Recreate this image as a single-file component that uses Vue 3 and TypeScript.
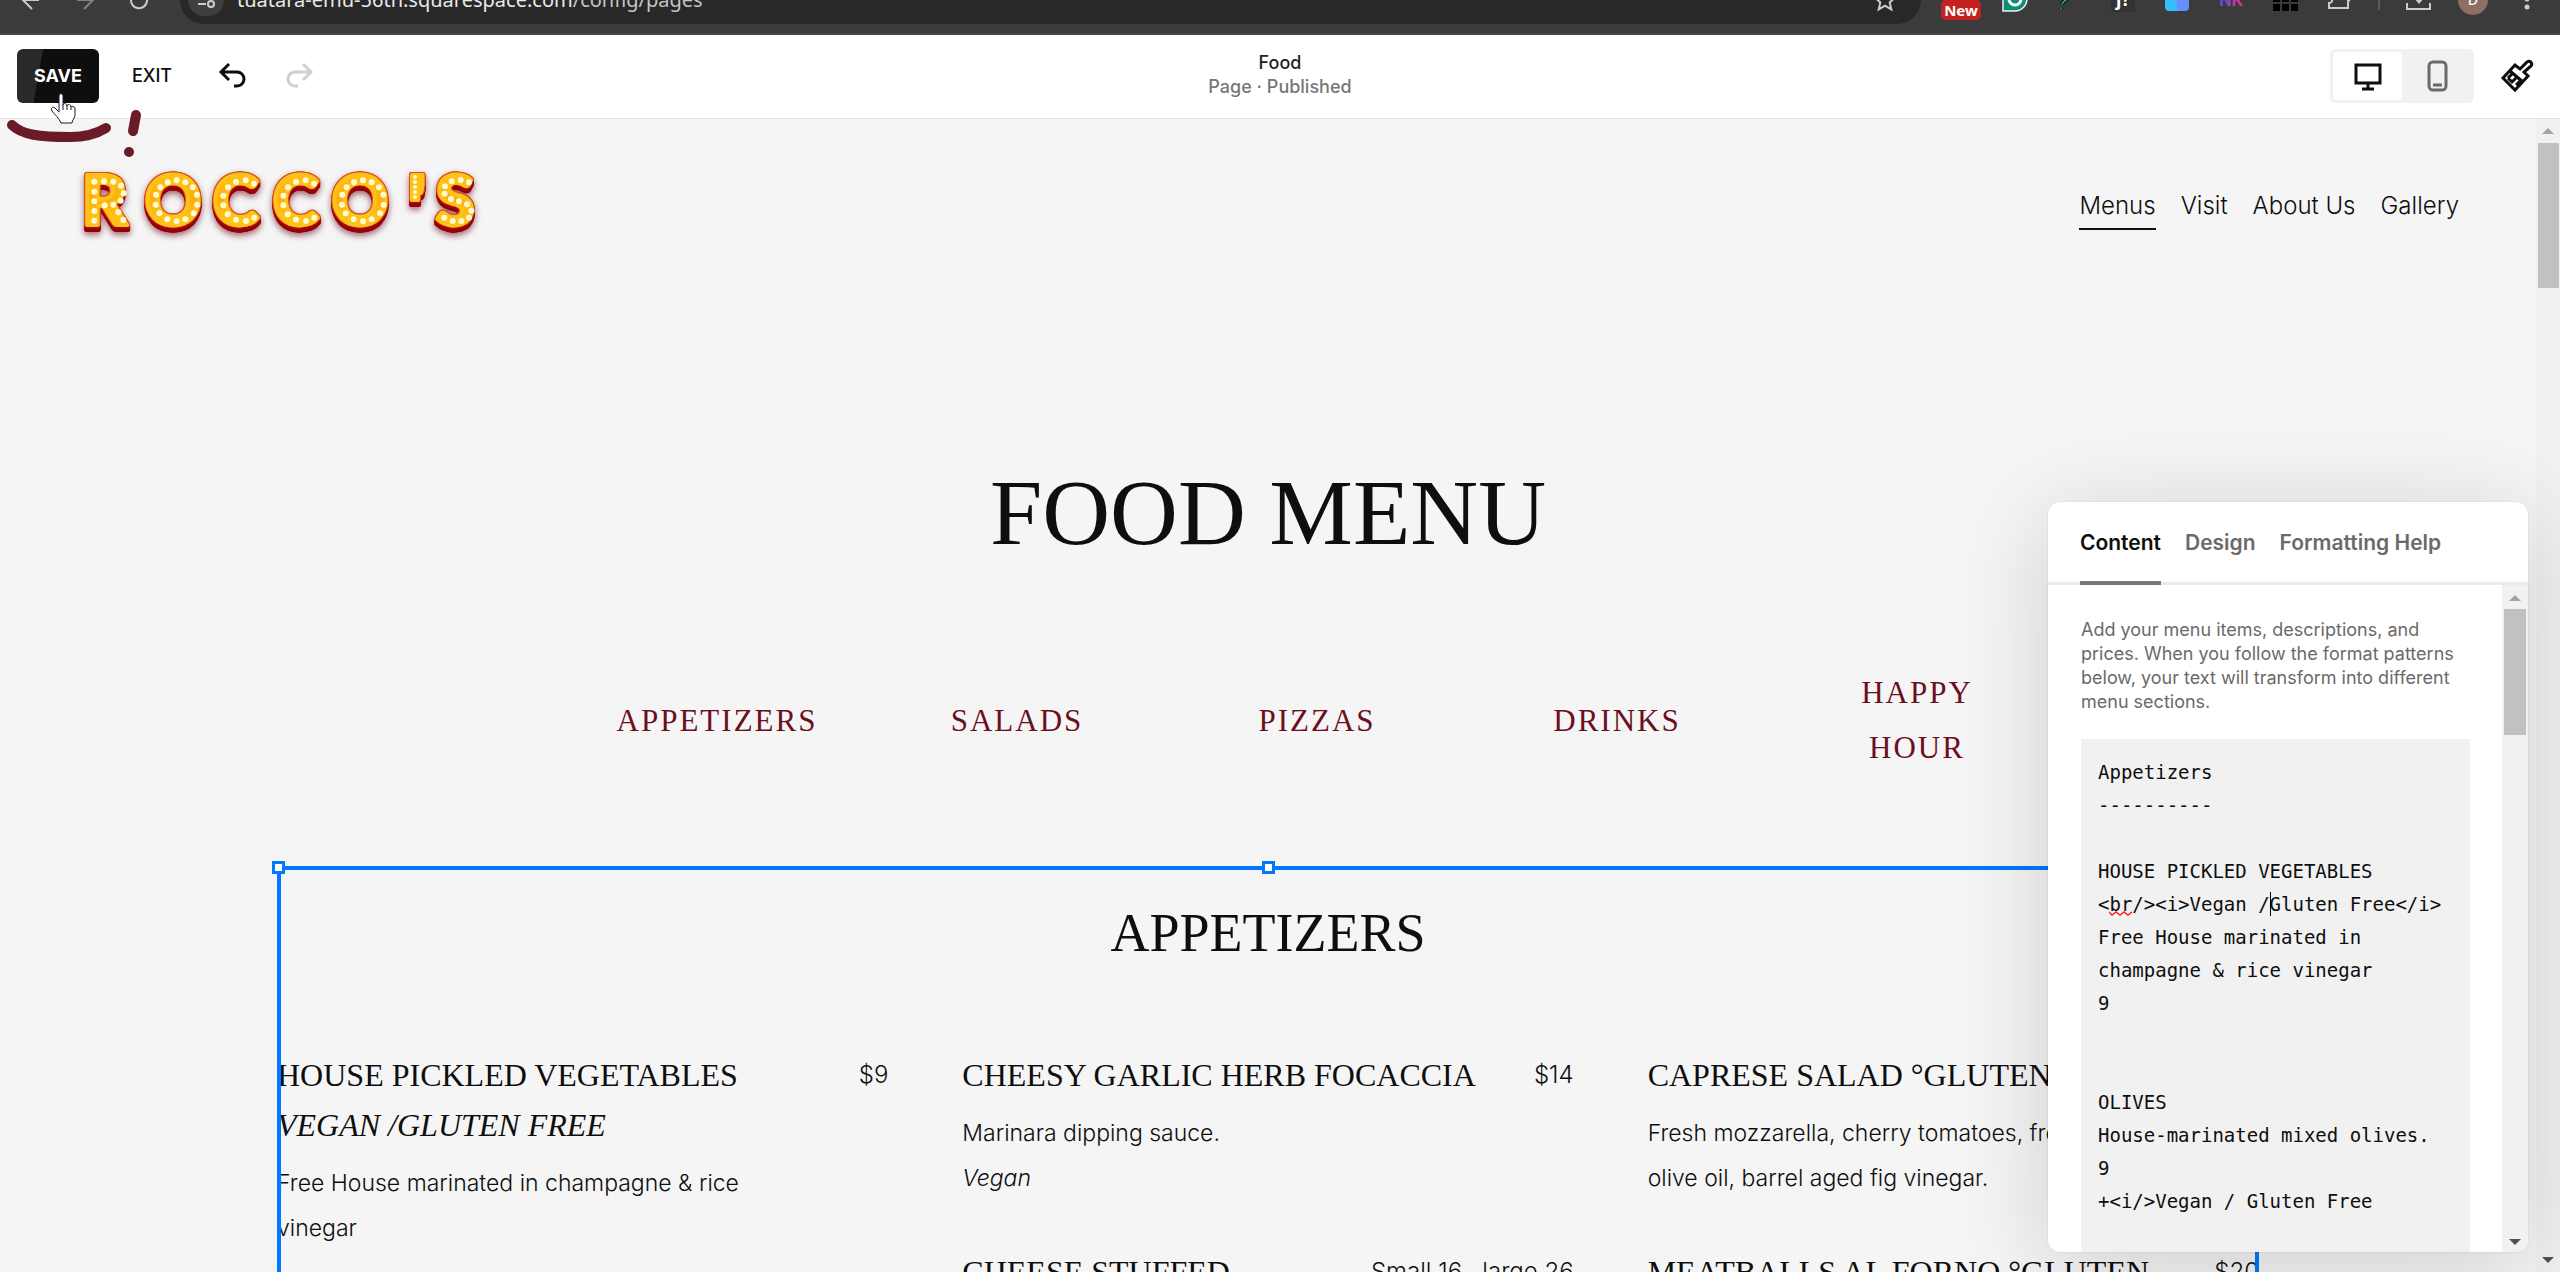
<script setup lang="ts">
import { ref } from 'vue'

interface MenuItem {
  title: string
  subtitle?: string
  price: string
  lines: string[]
  note?: string
}

const siteLinks: string[] = ['Menus', 'Visit', 'About Us', 'Gallery']

const categories: string[][] = [['Appetizers'], ['Salads'], ['Pizzas'], ['Drinks'], ['Happy', 'Hour']]

const columns: MenuItem[][] = [
  [
    {
      title: 'House Pickled Vegetables',
      subtitle: 'Vegan /Gluten Free',
      price: '$9',
      lines: ['Free House marinated in champagne & rice', 'vinegar'],
    },
  ],
  [
    { title: 'Cheesy Garlic Herb Focaccia', price: '$14', lines: ['Marinara dipping sauce.'], note: 'Vegan' },
    { title: 'Cheese Stuffed', price: 'Small 16 , large 26', lines: [] },
  ],
  [
    {
      title: 'Caprese Salad °Gluten',
      price: '',
      lines: ['Fresh mozzarella, cherry tomatoes, fresh', 'olive oil, barrel aged fig vinegar.'],
    },
    { title: 'Meatballs al Forno °Gluten', price: '$20', lines: [] },
  ],
]

const tabs: string[] = ['Content', 'Design', 'Formatting Help']

const menuText = ref<string>(
  [
    'Appetizers',
    '----------',
    '',
    'HOUSE PICKLED VEGETABLES',
    '<br/><i>Vegan /Gluten Free</i>',
    'Free House marinated in',
    'champagne & rice vinegar',
    '9',
    '',
    '',
    'OLIVES',
    'House-marinated mixed olives.',
    '9',
    '+<i/>Vegan / Gluten Free',
    '',
  ].join('\n'),
)

type Bulb = [number, number]

const oBulbs: Bulb[] = [
  [320, 91], [293, 97], [346, 97], [271, 112], [368, 112], [258, 134], [381, 134], [257, 164],
  [382, 164], [268, 190], [371, 190], [292, 208], [346, 208], [320, 214],
]
const cBulbs: Bulb[] = [
  [552, 101], [527, 91], [498, 96], [474, 112], [460, 137], [460, 166], [473, 193], [498, 209], [528, 213], [553, 203],
]
const rBulbs: Bulb[] = [
  [73, 95], [73, 125], [73, 154], [73, 183], [73, 212], [102, 94], [130, 95], [153, 107], [161, 130],
  [152, 152], [130, 164], [104, 166], [145, 187], [160, 210],
]
const sBulbs: Bulb[] = [
  [1197, 97], [1172, 90], [1145, 94], [1125, 109], [1124, 131], [1143, 147], [1167, 154], [1191, 163],
  [1204, 182], [1197, 203], [1174, 213], [1148, 213], [1123, 203],
]
const shift = (list: Bulb[], dx: number): Bulb[] => list.map(([x, y]) => [x + dx, y])
const bulbs: Bulb[] = [...rBulbs, ...oBulbs, ...cBulbs, ...shift(cBulbs, 180), ...shift(oBulbs, 559), ...sBulbs]
</script>

<template>
  <div class="app">
    <div class="chrome">
      <button class="cell" aria-label="Back">
        <svg width="24" height="48" viewBox="0 0 24 48"><path d="M20 24H4M13 15l-9 9 9 9" /></svg>
      </button>
      <button class="cell dim" aria-label="Forward">
        <svg width="24" height="48" viewBox="0 0 24 48"><path d="M4 24h16M11 15l9 9-9 9" /></svg>
      </button>
      <button class="cell" aria-label="Reload">
        <svg width="24" height="48" viewBox="0 0 24 48"><path d="M20 24a8 8 0 1 1-3-6" /></svg>
      </button>
      <div class="address">
        <span class="site-info">
          <svg width="22" height="22" viewBox="0 0 22 22"><path d="M3 15h8M11 6h8" /><circle cx="16" cy="15" r="3" /><circle cx="6" cy="6" r="3" /></svg>
        </span>
        <span class="url">tuatara-emu-56th.squarespace.com<i>/config/pages</i></span>
        <svg class="star" width="24" height="24" viewBox="0 0 24 24"><path d="M12 2l3 7 7 .6-5.300 4.800 1.600 7L12 17.600 5.700 21.400l1.600-7L2 9.600 9 9z" /></svg>
      </div>
      <div class="extensions">
        <span class="cell"><b class="new">New</b></span>
        <span class="cell">
          <svg width="28" height="48" viewBox="0 0 28 48"><path d="M2 35V22a12 12 0 1 1 12 13z" fill="#0b8f76" stroke="#e8f3f0" stroke-width="1.500" /><path d="M8 23a6 6 0 0 0 12 0" stroke="#fff" stroke-width="3" /></svg>
        </span>
        <span class="cell">
          <svg width="20" height="48" viewBox="0 0 20 48"><path d="M10 20c0 4-6 4-7 8M2 32v1" stroke="#111" stroke-width="4" /><path d="M10 20c0 4-6 4-7 8M2 32v1" stroke="#2fc04c" stroke-width="1.500" /></svg>
        </span>
        <span class="cell"><b class="tile">j?</b></span>
        <span class="cell"><i class="duo"></i></span>
        <span class="cell"><b class="nk">NK</b></span>
        <span class="cell"><svg width="26" height="48" viewBox="0 0 26 48"><path d="M1 21h7v5H1zM10 21h7v5h-7zM19 21h7v5h-7zM1 28h7v7H1zM10 28h7v7h-7zM19 28h7v7h-7z" fill="#000" stroke="none" /></svg></span>
        <span class="cell"><svg width="26" height="48" viewBox="0 0 26 48"><path d="M22 22v3l2-1M22 24v8H3v-5c4 0 4-5 1-5" /></svg></span>
        <span class="divider"></span>
        <span class="cell"><svg width="28" height="48" viewBox="0 0 28 48"><path d="M2 27v6h23v-6" /><path d="M14 16v9" /><path d="M9 22l5 6 5-6z" fill="#ccc" stroke="none" /></svg></span>
        <span class="cell"><b class="avatar">D</b></span>
        <span class="cell"><svg width="8" height="48" viewBox="0 0 8 48"><circle cx="4" cy="23" r="2.500" fill="#ccc" stroke="none" /><circle cx="4" cy="31" r="2.500" fill="#ccc" stroke="none" /></svg></span>
      </div>
    </div>

    <div class="toolbar">
      <div class="side">
        <button class="save">SAVE</button>
        <button class="exit">EXIT</button>
        <button class="icon undo" aria-label="Undo">
          <svg width="32" height="32" viewBox="0 0 32 32"><path d="M12 4l-8 8 8 8M5 12h15a7 7 0 0 1 0 14h-3" /></svg>
        </button>
        <button class="icon redo" aria-label="Redo" disabled>
          <svg width="32" height="32" viewBox="0 0 32 32"><path d="M20 4l8 8-8 8M27 12H12a7 7 0 0 0 0 14h3" /></svg>
        </button>
      </div>
      <div class="page-name">
        <strong>Food</strong>
        <span>Page · Published</span>
      </div>
      <div class="side end">
        <div class="devices">
          <button class="on" aria-label="Desktop view">
            <svg width="32" height="32" viewBox="0 0 32 32"><path d="M4 5h24v18H4zM16 23v5M10 29h12" /></svg>
          </button>
          <button aria-label="Mobile view">
            <svg width="32" height="34" viewBox="0 0 32 34"><rect x="8" y="3" width="17" height="28" rx="4" /><path d="M12 26h9" /></svg>
          </button>
        </div>
        <button class="icon" aria-label="Site styles">
          <svg width="34" height="34" viewBox="0 0 34 34"><path d="M15 6L3 19l12 12 13-14-4-4 7-6c2-3-1-6-4-4l-7 7zM10 12l13 11M8 19l5 5M12 15l-4 4M16 19l-4 4M20 22l-4 4" /></svg>
        </button>
      </div>
    </div>

    <div class="viewport">
      <main class="site">
        <header class="site-header">
          <svg class="logo" width="430" height="100" viewBox="0 0 430 100">
            <defs>
              <linearGradient id="gold" x1="0" y1="0" x2="0" y2="1">
                <stop offset="0" stop-color="#ffd21c" />
                <stop offset="0.500" stop-color="#fdae0b" />
                <stop offset="1" stop-color="#ffd722" />
              </linearGradient>
            </defs>
            <g class="sign">
              <text x="12 75 143 203 262 341 366" y="75">ROCCO'S</text>
              <rect x="342" y="25" width="6" height="25" />
            </g>
            <g class="bulbs">
              <circle v-for="([x, y], i) in bulbs" :key="i" :cx="x / 3" :cy="y / 3" r="3" />
              <circle v-for="n in 5" :key="'a' + n" cx="345" :cy="22 + n * 5" r="2" />
            </g>
          </svg>
          <nav class="site-nav">
            <a v-for="(link, i) in siteLinks" :key="link" href="#" :class="{ active: i === 0 }">{{ link }}</a>
          </nav>
        </header>

        <h1>FOOD MENU</h1>

        <nav class="categories">
          <a v-for="cat in categories" :key="cat[0]" href="#"><span v-for="word in cat" :key="word">{{ word }}</span></a>
        </nav>

        <section class="block">
          <i class="handle corner"></i>
          <i class="handle middle"></i>
          <h2>APPETIZERS</h2>
          <div class="columns">
            <div v-for="(col, c) in columns" :key="c" class="column">
              <article v-for="item in col" :key="item.title">
                <div class="item-head">
                  <h3>{{ item.title }}<em v-if="item.subtitle">{{ item.subtitle }}</em></h3>
                  <span class="price">{{ item.price }}</span>
                </div>
                <p v-if="item.lines.length">
                  <span v-for="line in item.lines" :key="line">{{ line }}</span>
                  <em v-if="item.note">{{ item.note }}</em>
                </p>
              </article>
            </div>
          </div>
        </section>
      </main>
      <div class="scrollbar">
        <svg width="12" height="24" viewBox="0 0 12 24"><path d="M0 15l6-6 6 6z" fill="#a3a3a3" /></svg>
        <i class="thumb page-thumb"></i>
        <svg class="down" width="12" height="24" viewBox="0 0 12 24"><path d="M0 9l6 6 6-6z" fill="#505050" /></svg>
      </div>

      <aside class="panel">
        <div class="tabs">
          <button v-for="(tab, i) in tabs" :key="tab" :class="{ active: i === 0 }">{{ tab }}</button>
        </div>
        <div class="panel-body">
          <div class="panel-content">
            <label for="menu-text">Add your menu items, descriptions, and<br />prices. When you follow the format patterns<br />below, your text will transform into different<br />menu sections.</label>
            <div class="editor">
              <textarea id="menu-text" v-model="menuText" spellcheck="false"></textarea>
              <svg class="squiggle" width="24" height="6" viewBox="0 0 24 6"><path d="M0 1l3 3 4-3 4 3 4-3 4 3 4-3" /></svg>
              <i class="caret"></i>
            </div>
          </div>
          <div class="scrollbar">
            <svg width="12" height="24" viewBox="0 0 12 24"><path d="M0 16l6-6 6 6z" fill="#a3a3a3" /></svg>
            <i class="thumb panel-thumb"></i>
            <svg class="down" width="12" height="20" viewBox="0 0 12 20"><path d="M0 7l6 6 6-6z" fill="#505050" /></svg>
          </div>
        </div>
      </aside>
    </div>

    <svg class="scribble" width="150" height="70" viewBox="0 0 150 70" aria-hidden="true">
      <path d="M12 35c10 10 28 12 58 12 16 0 28-4 36-9" />
      <path d="M136 25l-3 16" />
      <circle cx="129" cy="62" r="5" />
    </svg>
    <svg class="pointer" width="26" height="32" viewBox="0 0 26 32" aria-hidden="true">
      <path d="M9 19V3c0-3 4-3 4 0v9c0-2 4-2 4 1 0-2 4-2 4 1 0-1 3-1 4 1v7c0 3-3 5-3 8H11c-2-5-6-8-9-12-2-3 1-5 3-3z" />
      <path d="M13 12v5M17 13v4M21 14v3" />
    </svg>
  </div>
</template>

<style>
body {
  margin: 0;
  overflow: hidden;
}
</style>

<style scoped>
.app {
  position: relative;
  display: flex;
  flex-direction: column;
  height: 100vh;
  overflow: hidden;
  font-family: Inter, 'Liberation Sans', sans-serif;
  color: #0e0e0e;
}
button {
  padding: 0;
  border: 0;
  background: none;
  font: inherit;
  color: inherit;
}
a {
  color: inherit;
  text-decoration: none;
}
svg {
  display: block;
  flex: none;
}

/* browser bar, its upper part scrolled out of view */
.chrome {
  flex: none;
  box-sizing: border-box;
  display: flex;
  align-items: flex-end;
  height: 35px;
  padding: 0 6px 9px 4px;
  border-bottom: 2px solid #484646;
  background: #3b3b3b;
}
.chrome svg {
  fill: none;
  stroke: #ccc;
  stroke-width: 2;
}
.cell {
  flex: none;
  display: flex;
  align-items: center;
  justify-content: center;
  width: 54px;
  height: 48px;
}
.dim {
  opacity: 0.5;
}
.address {
  flex: 1;
  display: flex;
  align-items: center;
  height: 48px;
  margin: 0 13px 0 14px;
  border-radius: 24px;
  background: #282828;
}
.site-info {
  display: flex;
  align-items: center;
  justify-content: center;
  width: 36px;
  height: 32px;
  margin-left: 8px;
  border-radius: 18px;
  background: #3f3f3f;
}
.url {
  flex: 1;
  margin-left: 13px;
  font: 20px/34px 'Noto Sans', sans-serif;
  color: #e8e8e8;
}
.url i {
  font-style: normal;
  color: #c4c4c4;
}
.star {
  margin-right: 24px;
}
.extensions {
  display: flex;
}
.new {
  align-self: flex-end;
  margin-bottom: 4px;
  padding: 0 3px;
  border-radius: 5px;
  background: #c5221f;
  font: bold 15px/20px 'Noto Sans', sans-serif;
  color: #fff;
}
.tile {
  width: 24px;
  height: 24px;
  background: #333;
  font: bold 18px/22px 'Noto Sans', sans-serif;
  text-align: center;
  color: #fff;
}
.duo {
  width: 24px;
  height: 22px;
  border-radius: 4px;
  background: linear-gradient(90deg, #38bdfb 50%, #6690ff 50%);
}
.nk {
  font: bold 18px/24px Roboto, sans-serif;
  background: linear-gradient(90deg, #5a50f0, #e0307a);
  background-clip: text;
  color: transparent;
}
.divider {
  align-self: center;
  width: 2px;
  height: 20px;
  margin: 0 12px;
  background: #5c5c5c;
}
.avatar {
  width: 30px;
  height: 30px;
  border-radius: 50%;
  background: #8d6e63;
  font: 16px/30px Roboto, sans-serif;
  text-align: center;
  color: #fff;
}

/* editor toolbar */
.toolbar {
  flex: none;
  display: grid;
  grid-template-columns: 1fr auto 1fr;
  align-items: center;
  height: 83px;
  padding: 0 17px;
  border-bottom: 1px solid #e3e3e3;
  background: #fff;
}
.side {
  display: flex;
  align-items: center;
  height: 54px;
  margin-bottom: 1px;
}
.end {
  justify-content: flex-end;
  gap: 26px;
  padding-right: 9px;
}
.save,
.exit {
  padding-bottom: 2px;
  font-size: 18px;
}
.save {
  width: 82px;
  height: 54px;
  border-radius: 6px;
  background: linear-gradient(100deg, #292929 28%, #0e0e0e 29%);
  font-weight: 700;
  color: #fff;
}
.exit {
  margin-left: 33px;
  font-weight: 500;
}
.icon svg {
  fill: none;
  stroke: currentColor;
  stroke-width: 3;
}
.undo {
  margin-left: 45px;
}
.redo {
  margin-left: 34px;
  color: #cfcfcf;
}
.page-name {
  display: flex;
  flex-direction: column;
  align-items: center;
  padding-bottom: 4px;
  font-size: 18px;
  line-height: 24px;
  font-weight: 500;
  color: #777;
}
.page-name strong {
  font-weight: 500;
  color: #222;
}
.devices {
  box-sizing: border-box;
  display: flex;
  width: 144px;
  height: 54px;
  padding: 3px;
  border-radius: 6px;
  background: #f1f1f1;
}
.devices button {
  flex: 1;
  display: flex;
  align-items: center;
  justify-content: center;
  border-radius: 4px;
  color: #6a6a6a;
}
.devices .on {
  background: #fff;
  color: #0e0e0e;
}
.devices svg {
  fill: none;
  stroke: currentColor;
  stroke-width: 3;
}

/* site preview */
.viewport {
  position: relative;
  flex: 1;
  display: flex;
  min-height: 0;
  overflow: hidden;
}
.site {
  flex: 1;
  min-width: 0;
  background: #f5f5f5;
  font-weight: 300;
}
.scrollbar {
  flex: none;
  display: flex;
  flex-direction: column;
  align-items: center;
  width: 24px;
  background: #f1f1f1;
}
.thumb {
  background: #c1c1c1;
}
.page-thumb {
  width: 21px;
  height: 145px;
}
.down {
  margin-top: auto;
}
.site-header {
  display: flex;
  align-items: flex-start;
  justify-content: space-between;
  padding: 31px 77px 0 70px;
}
.logo text {
  font: 900 69px Lato, sans-serif;
}
.sign {
  fill: url(#gold);
  stroke: #ffc21a;
  stroke-width: 4;
  stroke-linejoin: round;
  filter: drop-shadow(1px 0 0 #d9541a) drop-shadow(-1px 0 0 #d9541a) drop-shadow(0 -1px 0 #d9541a)
    drop-shadow(0 2px 0 #a80508) drop-shadow(0 3px 0 #8e0408) drop-shadow(0 3px 3px rgba(110, 10, 30, 0.6));
}
.bulbs {
  fill: #fffbd0;
}
.site-nav {
  display: flex;
  gap: 25px;
  margin-top: 34px;
  font-size: 24px;
  line-height: 44px;
}
.site-nav a {
  border-bottom: 2px solid transparent;
}
.site-nav .active {
  border-color: #111;
}
h1,
h2,
h3,
p {
  margin: 0;
  font-weight: 400;
}
h1,
h2,
h3,
.categories {
  font-family: 'Liberation Serif', serif;
  text-transform: uppercase;
}
h1 {
  margin-top: 206px;
  font-size: 94px;
  line-height: 112px;
  text-align: center;
}
.categories {
  display: grid;
  grid-template-columns: repeat(5, 300px);
  align-items: center;
  margin: 97px 0 0 567px;
  font-size: 31px;
  line-height: 55px;
  letter-spacing: 2px;
  text-align: center;
  color: #6b0f1e;
}
.categories span {
  display: block;
}
.block {
  position: relative;
  margin: 91px 277px 0;
  padding-top: 35px;
}
.block::after {
  content: '';
  position: absolute;
  inset: 0 0 -80px;
  border: 4px solid #0078ff;
}
.handle {
  position: absolute;
  z-index: 1;
  top: -5px;
  box-sizing: border-box;
  width: 13px;
  height: 13px;
  border: 3px solid #0078ff;
  background: #fff;
}
.corner {
  left: -5px;
}
.middle {
  left: calc(50% - 6px);
}
h2 {
  font-size: 54px;
  line-height: 64px;
  text-align: center;
}
.columns {
  display: grid;
  grid-template-columns: repeat(3, 1fr);
  gap: 74px;
  margin-top: 85px;
}
.column {
  display: flex;
  flex-direction: column;
  gap: 46px;
}
.item-head {
  display: flex;
  justify-content: space-between;
}
h3 {
  font-size: 32px;
  line-height: 50px;
}
h3 em {
  display: block;
}
.price,
p {
  line-height: 45px;
}
.price {
  padding-top: 2px;
  font-size: 24px;
}
p {
  margin-top: 11px;
  font-size: 23px;
  font-weight: 300;
}
p span,
p em {
  display: block;
}

/* block settings panel */
.panel {
  position: absolute;
  z-index: 2;
  top: 383px;
  right: 32px;
  bottom: 20px;
  display: flex;
  flex-direction: column;
  width: 480px;
  border-radius: 12px;
  overflow: hidden;
  background: #fff;
  box-shadow: 0 0 2px rgba(0, 0, 0, 0.12), 0 16px 100px rgba(0, 0, 0, 0.16);
}
.tabs {
  flex: none;
  display: flex;
  gap: 24px;
  height: 80px;
  padding: 0 32px;
  border-bottom: 3px solid #ebebeb;
  font-size: 21px;
  font-weight: 600;
  color: #6a6a6a;
}
.tabs button {
  height: 83px;
  padding-top: 2px;
  border-bottom: 4px solid transparent;
}
.tabs .active {
  border-color: #777;
  color: #0e0e0e;
}
.panel-body {
  flex: 1;
  display: flex;
  min-height: 0;
}
.panel-body .scrollbar {
  width: 26px;
}
.panel-thumb {
  width: 22px;
  height: 126px;
}
.panel-content {
  flex: 1;
  display: flex;
  flex-direction: column;
  padding: 33px 32px 0 33px;
}
label {
  font-size: 18px;
  line-height: 24px;
  color: #6a6a6a;
  white-space: nowrap;
}
.editor {
  position: relative;
  flex: 1;
  display: flex;
  margin-top: 25px;
  font: 19px/33px 'DejaVu Sans Mono', monospace;
}
textarea {
  flex: 1;
  box-sizing: border-box;
  min-width: 0;
  padding: 17px 17px 0;
  border: 0;
  outline: 0;
  resize: none;
  overflow: hidden;
  background: #f1f1f1;
  font: inherit;
  color: #0e0e0e;
}
.squiggle {
  position: absolute;
  top: 172px;
  left: calc(17px + 1ch);
  fill: none;
  stroke: #f22;
  stroke-width: 1.500;
}
.caret {
  position: absolute;
  top: 153px;
  left: calc(17px + 15ch);
  width: 1px;
  height: 24px;
  background: #000;
}

/* hand-drawn hint and mouse pointer above the toolbar */
.scribble {
  position: absolute;
  top: 90px;
  left: 0;
  fill: none;
  stroke: #6b1a28;
  stroke-width: 10;
  stroke-linecap: round;
}
.scribble circle {
  fill: #6b1a28;
  stroke: none;
}
.pointer {
  position: absolute;
  top: 93px;
  left: 50px;
  fill: #fff;
  stroke: #1a1a33;
  stroke-width: 1;
}
</style>
